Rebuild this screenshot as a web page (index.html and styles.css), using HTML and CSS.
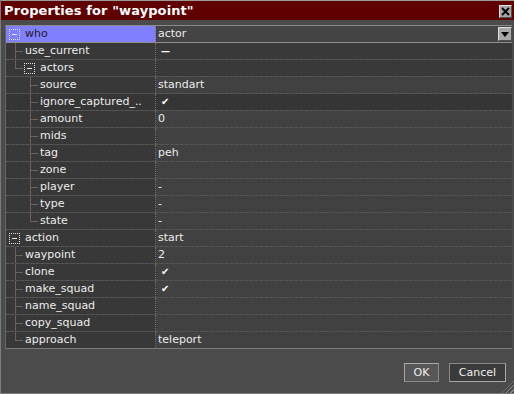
FILE: index.html
```html
<!DOCTYPE html>
<html lang="en">
<head>
    <meta charset="UTF-8">
    <title>Properties for "waypoint"</title>
    <link rel="stylesheet" href="styles.css">
</head>
<body>
    <div class="window">
        <div class="titlebar">
            <span class="title">Properties for "waypoint"</span>
            <span class="close">
                <svg width="9" height="9" viewBox="0 0 9 9"><path d="M1 1L8 8M8 1L1 8" stroke="#000" stroke-width="2"/></svg>
            </span>
        </div>

        <div class="grid">
            <div class="row sel">
                <div class="name"><span class="box"></span><span class="label">who</span></div>
                <div class="value combo">
                    <span>actor</span>
                    <span class="drop"><svg width="8" height="5" viewBox="0 0 8 5"><path d="M0 0H8L4 5Z" fill="#000"/></svg></span>
                </div>
            </div>
            <div class="row">
                <div class="name"><span class="guide tee"></span><span class="label">use_current</span></div>
                <div class="value dim"><span class="dash">—</span></div>
            </div>
            <div class="row">
                <div class="name"><span class="guide end"></span><span class="box"></span><span class="label">actors</span></div>
                <div class="value dim"></div>
            </div>
            <div class="row">
                <div class="name"><span class="guide"></span><span class="guide tee"></span><span class="label">source</span></div>
                <div class="value">standart</div>
            </div>
            <div class="row">
                <div class="name dark"><span class="guide"></span><span class="guide tee"></span><span class="label">ignore_captured_..</span></div>
                <div class="value dark"><span class="check">✔</span></div>
            </div>
            <div class="row">
                <div class="name"><span class="guide"></span><span class="guide tee"></span><span class="label">amount</span></div>
                <div class="value">0</div>
            </div>
            <div class="row">
                <div class="name"><span class="guide"></span><span class="guide tee"></span><span class="label">mids</span></div>
                <div class="value"></div>
            </div>
            <div class="row">
                <div class="name"><span class="guide"></span><span class="guide tee"></span><span class="label">tag</span></div>
                <div class="value">peh</div>
            </div>
            <div class="row">
                <div class="name"><span class="guide"></span><span class="guide tee"></span><span class="label">zone</span></div>
                <div class="value"></div>
            </div>
            <div class="row">
                <div class="name"><span class="guide"></span><span class="guide tee"></span><span class="label">player</span></div>
                <div class="value">-</div>
            </div>
            <div class="row">
                <div class="name"><span class="guide"></span><span class="guide tee"></span><span class="label">type</span></div>
                <div class="value">-</div>
            </div>
            <div class="row">
                <div class="name"><span class="guide"></span><span class="guide end"></span><span class="label">state</span></div>
                <div class="value">-</div>
            </div>
            <div class="row">
                <div class="name"><span class="box"></span><span class="label">action</span></div>
                <div class="value">start</div>
            </div>
            <div class="row">
                <div class="name"><span class="guide tee"></span><span class="label">waypoint</span></div>
                <div class="value">2</div>
            </div>
            <div class="row">
                <div class="name"><span class="guide tee"></span><span class="label">clone</span></div>
                <div class="value"><span class="check">✔</span></div>
            </div>
            <div class="row">
                <div class="name"><span class="guide tee"></span><span class="label">make_squad</span></div>
                <div class="value"><span class="check">✔</span></div>
            </div>
            <div class="row">
                <div class="name"><span class="guide tee"></span><span class="label">name_squad</span></div>
                <div class="value"></div>
            </div>
            <div class="row">
                <div class="name"><span class="guide tee"></span><span class="label">copy_squad</span></div>
                <div class="value"></div>
            </div>
            <div class="row">
                <div class="name"><span class="guide end"></span><span class="label">approach</span></div>
                <div class="value">teleport</div>
            </div>
        </div>

        <div class="footer">
            <button class="btn ok">OK</button>
            <button class="btn cancel">Cancel</button>
        </div>
        <span class="grip"></span>
    </div>
</body>
</html>
```

FILE: styles.css
```css
body {
    margin: 0;
    padding: 0;
    background: #4b4b4b;
    font-family: "DejaVu Sans", sans-serif;
}

.window {
    position: relative;
    width: 514px;
    height: 394px;
    box-sizing: border-box;
    background: #4b4b4b;
    border-left: 1px solid #7c7c7c;
    border-bottom: 1px solid #7c7c7c;
    display: flex;
    flex-direction: column;
}

/* title bar */
.titlebar {
    height: 19px;
    border-top: 1px solid #9a9a9a;
    background: #600000;
    display: flex;
    align-items: center;
    justify-content: space-between;
    padding: 0 2px 0 3px;
}

.title {
    color: #fff;
    font-size: 13px;
    font-weight: bold;
    letter-spacing: 0.1px;
}

.close {
    width: 13px;
    height: 13px;
    box-sizing: border-box;
    background: #a6a6a6;
    border: 1px solid;
    border-color: #e0e0e0 #505050 #505050 #e0e0e0;
    display: flex;
    align-items: center;
    justify-content: center;
    margin-top: 2px;
}

/* property grid */
.grid {
    margin: 5px 2px 0 4px;
    border-top: 1px solid #8a8a8a;
    border-left: 1px solid #666;
    border-bottom: 1px solid #7a7a7a;
}

.row {
    display: grid;
    grid-template-columns: 150px 1fr;
    height: 16px;
    border-bottom: 1px dashed #575757;
    font-size: 11px;
    color: #ececec;
    line-height: 16px;
}

.row:last-child {
    border-bottom: none;
}

.name {
    display: flex;
    align-items: center;
    padding-left: 3px;
    background: #383838;
    border-right: 1px dotted #7a6e66;
    overflow: hidden;
    white-space: nowrap;
}

.value {
    display: flex;
    align-items: center;
    padding-left: 2px;
    background: #414141;
    white-space: nowrap;
}

.value.dim {
    background: #393939;
}

.dark {
    background: #353535;
}

.row.sel {
    border-bottom: 1px solid #8e8e8e;
}

.row.sel .name {
    background: #8080ff;
    color: #1c1c1c;
}

.combo {
    background: #444;
    justify-content: space-between;
}

.drop {
    width: 14px;
    height: 14px;
    box-sizing: border-box;
    background: #a8a8a8;
    border: 1px solid;
    border-color: #e0e0e0 #505050 #505050 #e0e0e0;
    display: flex;
    align-items: center;
    justify-content: center;
}

/* tree guides */
.guide {
    width: 15px;
    height: 16px;
    flex: none;
}

.guide.tee {
    background:
        linear-gradient(#6c6058, #6c6058) 6px 0 / 1px 100% no-repeat,
        linear-gradient(#6c6058, #6c6058) 6px 8px / 8px 1px no-repeat;
}

.guide.end {
    background:
        linear-gradient(#6c6058, #6c6058) 6px 0 / 1px 9px no-repeat,
        linear-gradient(#6c6058, #6c6058) 6px 8px / 8px 1px no-repeat;
}

.box {
    width: 11px;
    height: 11px;
    box-sizing: border-box;
    flex: none;
    border: 1px dotted #e0e0e0;
    background: linear-gradient(#e8e8e8, #e8e8e8) center / 5px 1px no-repeat;
}

.box + .label {
    margin-left: 5px;
}

.guide + .label {
    margin-left: 1px;
}

.check {
    margin-left: 3px;
    font-size: 10px;
    color: #fff;
}

.dash {
    margin-left: 3px;
    font-size: 9px;
    font-weight: bold;
    color: #fff;
}

/* buttons */
.footer {
    display: flex;
    justify-content: flex-end;
    gap: 10px;
    padding: 14px 8px 0 0;
}

.btn {
    height: 19px;
    padding: 0;
    font-family: "DejaVu Sans", sans-serif;
    font-size: 11px;
    color: #f0f0f0;
    line-height: 17px;
}

.ok {
    width: 35px;
    background: #575757;
    border: 1px solid;
    border-color: #a8a8a8 #8a8a8a #8a8a8a #a8a8a8;
}

.cancel {
    width: 57px;
    background: #3b3b3b;
    border: 1px solid;
    border-color: #8a8a8a #a8a8a8 #a8a8a8 #8a8a8a;
}

.grip {
    position: absolute;
    right: 0;
    bottom: 0;
    width: 12px;
    height: 12px;
    background: repeating-linear-gradient(135deg, transparent 0 2px, #8a8a8a 2px 3px);
    clip-path: polygon(100% 0, 100% 100%, 0 100%);
}
```
